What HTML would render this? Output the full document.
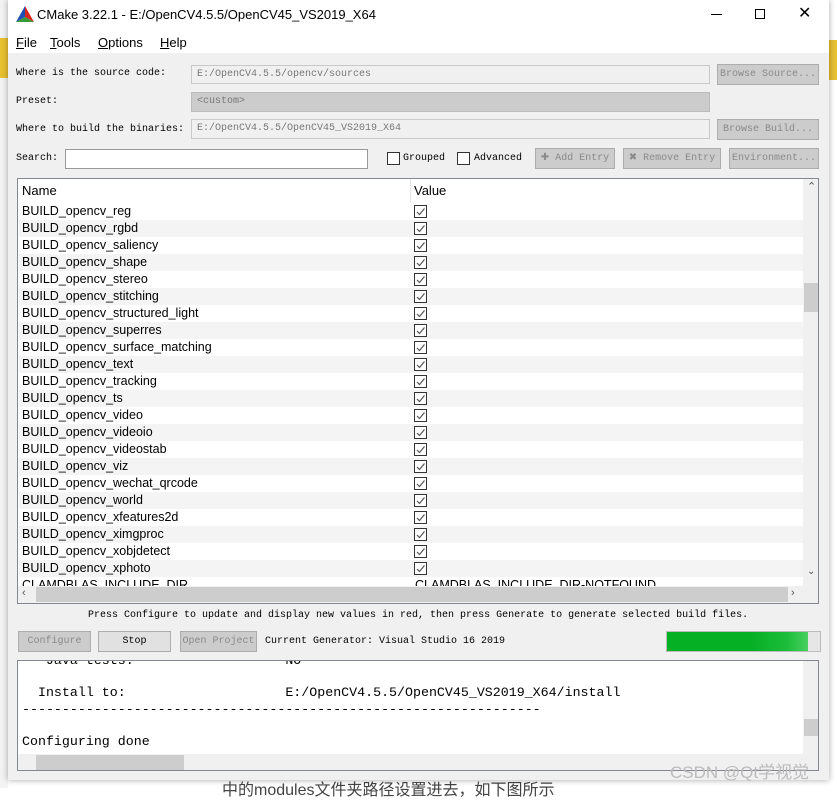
<!DOCTYPE html>
<html><head><meta charset="utf-8"><style>
*{margin:0;padding:0;box-sizing:border-box}
body{width:837px;height:788px;background:#fff;position:relative;overflow:hidden;font-family:"Liberation Sans","Noto Sans CJK SC",sans-serif;font-size:13px;color:#000}
.a{position:absolute;white-space:nowrap}
.win{left:8px;top:0;width:821px;height:780px;background:#f0f0f0;box-shadow:0 0 6px rgba(0,0,0,.35)}
.mono{font-family:"Liberation Mono","Noto Sans CJK SC",monospace;font-size:10px}
.btn{background:#ccc;border:1px solid #adadad;color:#8a8a8a;text-align:center;line-height:19px;font-family:"Liberation Mono",monospace;font-size:10px;overflow:hidden}
.inp{border:1px solid #c8c8c8;background:#f0f0f0;color:#777;padding-left:5px;line-height:17px}
.row{position:absolute;left:1px;width:785px;height:17px;line-height:17px;padding-left:3px;font-size:12.5px}
.cb{position:absolute;left:395px;top:2px;width:13px;height:13px;border:1px solid #333;background:#fff}
</style></head><body>
<div class="a" style="left:0;top:0;width:8px;height:788px;background:#f3f3f3"></div>
<div class="a" style="left:0;top:38px;width:8px;height:40px;background:#e8c030"></div>
<div class="a" style="left:829px;top:40px;width:8px;height:40px;background:#e8c030"></div>
<div class="a" style="left:222px;top:776px;font-size:16px;color:#444">中的modules文件夹路径设置进去，如下图所示</div>
<div class="a win">
 <div class="a" style="left:0;top:0;width:821px;height:53px;background:#fff"></div>
 <svg class="a" style="left:8px;top:6px" width="18" height="17" viewBox="0 0 18 17"><polygon points="9,0 0,16 9,11" fill="#1f4fb5"/><polygon points="9,0 18,16 9,11" fill="#d9261c"/><polygon points="0,16 18,16 9,11" fill="#3a9a3a"/></svg>
 <div class="a" style="left:29px;top:7px;font-size:13px">CMake 3.22.1 - E:/OpenCV4.5.5/OpenCV45_VS2019_X64</div>
 <div class="a" style="left:703px;top:14px;width:11px;height:1px;background:#000"></div>
 <div class="a" style="left:747px;top:9px;width:10px;height:10px;border:1px solid #000"></div>
 <div class="a" style="left:790px;top:3px;font-size:16px">✕</div>
 <div class="a" style="left:8px;top:35px"><u>F</u>ile</div>
 <div class="a" style="left:42px;top:35px"><u>T</u>ools</div>
 <div class="a" style="left:90px;top:35px"><u>O</u>ptions</div>
 <div class="a" style="left:152px;top:35px"><u>H</u>elp</div>
 <div class="a mono" style="left:8px;top:68px">Where is the source code:</div>
 <div class="a inp mono" style="left:183px;top:65px;width:519px;height:19px">E:/OpenCV4.5.5/opencv/sources</div>
 <div class="a btn" style="left:709px;top:64px;width:102px;height:21px">Browse Source...</div>
 <div class="a mono" style="left:8px;top:96px">Preset:</div>
 <div class="a inp mono" style="left:183px;top:92px;width:519px;height:20px;background:#ccc;border-color:#bbb">&lt;custom&gt;</div>
 <div class="a mono" style="left:8px;top:124px">Where to build the binaries:</div>
 <div class="a inp mono" style="left:183px;top:119px;width:519px;height:20px">E:/OpenCV4.5.5/OpenCV45_VS2019_X64</div>
 <div class="a btn" style="left:709px;top:119px;width:102px;height:21px">Browse Build...</div>
 <div class="a mono" style="left:8px;top:153px">Search:</div>
 <div class="a" style="left:57px;top:149px;width:303px;height:20px;border:1px solid #999;background:#fff"></div>
 <div class="a" style="left:379px;top:152px;width:13px;height:13px;border:1px solid #333;background:#fff"></div>
 <div class="a mono" style="left:395px;top:153px">Grouped</div>
 <div class="a" style="left:449px;top:152px;width:13px;height:13px;border:1px solid #333;background:#fff"></div>
 <div class="a mono" style="left:466px;top:153px">Advanced</div>
 <div class="a btn" style="left:527px;top:148px;width:80px;height:21px">✚ Add Entry</div>
 <div class="a btn" style="left:615px;top:148px;width:98px;height:21px">✖ Remove Entry</div>
 <div class="a btn" style="left:721px;top:148px;width:90px;height:21px">Environment...</div>
 <div class="a" style="left:9px;top:178px;width:802px;height:426px;border:1px solid #828790;background:#fff;overflow:hidden">
  <div class="a" style="left:4px;top:4px">Name</div>
  <div class="a" style="left:392px;top:0;width:1px;height:24px;background:#e5e5e5"></div>
  <div class="a" style="left:396px;top:4px">Value</div>
  <div id="rows"></div>
  <div class="a" style="left:785px;top:0;width:16px;height:407px;background:#f0f0f0"></div>
  <div class="a" style="left:789px;top:1px;font-size:11px;color:#555">⌃</div>
  <div class="a" style="left:786px;top:104px;width:14px;height:29px;background:#cdcdcd"></div>
  <div class="a" style="left:789px;top:387px;font-size:10px;color:#555">⌄</div>
  <div class="a" style="left:0;top:407px;width:801px;height:17px;background:#f0f0f0"></div>
  <div class="a" style="left:18px;top:408px;width:752px;height:15px;background:#cdcdcd"></div>
  <div class="a" style="left:4px;top:408px;font-size:11px;color:#555">‹</div>
  <div class="a" style="left:773px;top:408px;font-size:11px;color:#555">›</div>
 </div>
 <div class="a mono" style="left:80px;top:610px">Press Configure to update and display new values in red, then press Generate to generate selected build files.</div>
 <div class="a btn" style="left:10px;top:631px;width:73px;height:21px">Configure</div>
 <div class="a btn" style="left:90px;top:631px;width:73px;height:21px;background:#e1e1e1;color:#000">Stop</div>
 <div class="a btn" style="left:172px;top:631px;width:77px;height:21px">Open Project</div>
 <div class="a mono" style="left:257px;top:636px">Current Generator: Visual Studio 16 2019</div>
 <div class="a" style="left:658px;top:631px;width:155px;height:21px;border:1px solid #bcbcbc;background:#e6e6e6"><div style="width:141px;height:19px;background:linear-gradient(90deg,#06b025 0%,#06b025 60%,#1cbd3a 85%,#48d060 100%)"></div></div>
 <div class="a" style="left:9px;top:660px;width:802px;height:111px;border:1px solid #828790;background:#fff;overflow:hidden;font-family:'Liberation Mono',monospace;font-size:13.3px">
  <div class="a" style="left:4px;top:-8px;white-space:pre">   Java tests:                   NO</div>
  <div class="a" style="left:4px;top:24px;white-space:pre">  Install to:                    E:/OpenCV4.5.5/OpenCV45_VS2019_X64/install</div>
  <div class="a" style="left:4px;top:41px;white-space:pre">-----------------------------------------------------------------</div>
  <div class="a" style="left:4px;top:73px">Configuring done</div>
  <div class="a" style="left:785px;top:0;width:16px;height:93px;background:#f0f0f0"></div>
  <div class="a" style="left:786px;top:58px;width:14px;height:17px;background:#cdcdcd"></div>
  <div class="a" style="left:0;top:93px;width:801px;height:17px;background:#f0f0f0"></div>
  <div class="a" style="left:18px;top:94px;width:148px;height:15px;background:#cdcdcd"></div>
 </div>
</div>
<div class="a" style="left:670px;top:758px;font-size:17px;color:#bbb">CSDN @Qt学视觉</div>
<script>
var n=["reg","rgbd","saliency","shape","stereo","stitching","structured_light","superres","surface_matching","text","tracking","ts","video","videoio","videostab","viz","wechat_qrcode","world","xfeatures2d","ximgproc","xobjdetect","xphoto"];
var h="";
for(var i=0;i<n.length;i++){h+='<div class="row" style="top:'+(24+17*i)+'px;background:'+(i%2?'#f4f4f4':'#fff')+'">BUILD_opencv_'+n[i]+'<div class="cb"><svg width="11" height="11" style="position:absolute;left:0;top:0"><path d="M2 6 L4.5 8.5 L9.5 2.5" stroke="#555" fill="none" stroke-width="1.2"/></svg></div></div>';}
h+='<div class="row" style="top:'+(24+17*22)+'px;background:#fff">CLAMDBLAS_INCLUDE_DIR<span style="position:absolute;left:396px">CLAMDBLAS_INCLUDE_DIR-NOTFOUND</span></div>';
document.getElementById("rows").innerHTML=h;
</script>
</body></html>
